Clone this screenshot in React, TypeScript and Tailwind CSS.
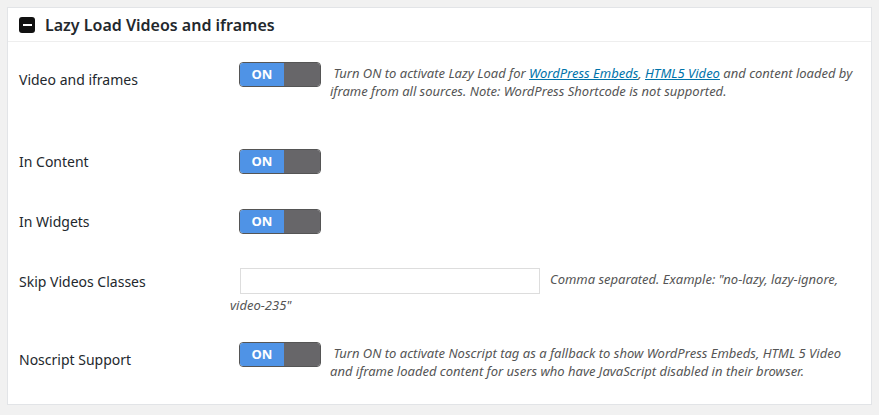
import React from "react";

const font = { fontFamily: '"Noto Sans", "Liberation Sans", sans-serif' };

function Toggle() {
  return (
    <div className="ml-[9px] flex h-[25px] w-[82px] shrink-0 overflow-hidden rounded-[4px] border border-[#555]">
      <div className="flex w-[44px] items-center justify-center bg-[#4f93e6] text-[13px] font-bold text-white">ON</div>
      <div className="flex-1 bg-[#676669]" />
    </div>
  );
}

function Row({ label, labelPad, children, className }: { label: string; labelPad: string; children: React.ReactNode; className: string }) {
  return (
    <div className={`flex items-start ${className}`}>
      <div className={`w-[222px] shrink-0 pl-[11px] text-[14px] leading-[20px] text-[#23282d] ${labelPad}`}>{label}</div>
      <div className="flex-1 pr-[17px]">{children}</div>
    </div>
  );
}

export default function App() {
  return (
    <div className="min-h-[415px] w-[879px] bg-[#f1f1f1] pl-[7px] pt-[7px]" style={font}>
      <div className="h-[398px] w-[865px] border border-[#e2e4e7] bg-white">
        <div className="flex h-[34px] items-center gap-[10px] border-b border-[#eeeeee] pl-[11px]">
          <div className="flex h-[16px] w-[16px] items-center justify-center rounded-[3px] bg-[#111]">
            <div className="h-[2px] w-[9px] bg-white" />
          </div>
          <h2 className="text-[16px] font-semibold text-[#23282d]">Lazy Load Videos and iframes</h2>
        </div>

        <Row label="Video and iframes" labelPad="pt-[8px]" className="mt-[20px]">
          <div className="flex items-start gap-[9px]">
            <Toggle />
            <p className="pt-[2px] text-[13px] italic leading-[18px] text-[#555]">
              &nbsp;Turn ON to activate Lazy Load for{" "}
              <a className="text-[#0073aa] underline">WordPress Embeds</a>,{" "}
              <a className="text-[#0073aa] underline">HTML5 Video</a> and content loaded by iframe from all sources. Note: WordPress Shortcode is not supported.
            </p>
          </div>
        </Row>

        <Row label="In Content" labelPad="pt-[3px]" className="mt-[49px]">
          <Toggle />
        </Row>

        <Row label="In Widgets" labelPad="pt-[3px]" className="mt-[35px]">
          <Toggle />
        </Row>

        <Row label="Skip Videos Classes" labelPad="pt-[4px]" className="mt-[34px]">
          <p className="text-[13px] italic leading-[22px] text-[#555]">
            <input
              type="text"
              className="ml-[10px] mr-[10px] h-[26px] w-[300px] border border-[#ddd] align-middle outline-none"
            />
            Comma separated. Example: "no-lazy, lazy-ignore, video-235"
          </p>
        </Row>

        <Row label="Noscript Support" labelPad="pt-[8px]" className="mt-[26px]">
          <div className="flex items-start gap-[9px]">
            <Toggle />
            <p className="pt-[2px] text-[13px] italic leading-[18px] text-[#555]">
              &nbsp;Turn ON to activate Noscript tag as a fallback to show WordPress Embeds, HTML 5 Video and iframe loaded content for users who have JavaScript disabled in their browser.
            </p>
          </div>
        </Row>
      </div>
    </div>
  );
}
